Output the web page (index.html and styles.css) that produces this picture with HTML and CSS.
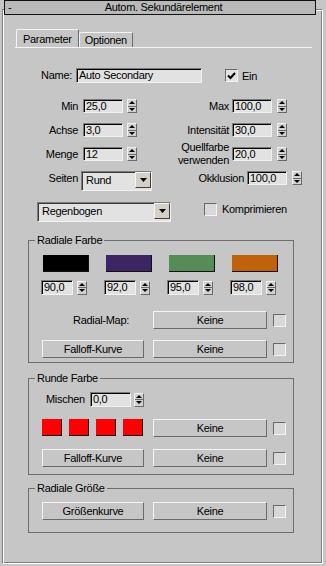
FILE: index.html
```html
<!DOCTYPE html>
<html lang="de">
<head>
    <meta charset="UTF-8">
    <meta name="viewport" content="width=device-width, initial-scale=1.0">
    <title>Autom. Sekundärelement</title>
    <link rel="stylesheet" href="styles.css">
</head>
<body>
    <div class="rollout-title">
        <span class="collapse">-</span>
        <span class="title">Autom. Sekundärelement</span>
    </div>
    <div class="rollout">
        <div class="tabs">
            <div class="tab active">Parameter</div>
            <div class="tab">Optionen</div>
        </div>

        <div class="name-row">
            <span class="lbl">Name:</span>
            <div class="field name-field">Auto Secondary</div>
            <span class="check checked"><svg width="9" height="8" viewBox="0 0 9 8"><path d="M1 3.5 3.5 6 8 1" fill="none" stroke="#000" stroke-width="2"/></svg></span>
            <span class="check-lbl">Ein</span>
        </div>

        <div class="spin-rows">
            <div class="row">
                <div class="cell left"><span class="lbl">Min</span><div class="field num">25,0</div><span class="spin"><i></i><i></i></span></div>
                <div class="cell right"><span class="lbl">Max</span><div class="field num">100,0</div><span class="spin"><i></i><i></i></span></div>
            </div>
            <div class="row">
                <div class="cell left"><span class="lbl">Achse</span><div class="field num">3,0</div><span class="spin"><i></i><i></i></span></div>
                <div class="cell right"><span class="lbl">Intensität</span><div class="field num">30,0</div><span class="spin"><i></i><i></i></span></div>
            </div>
            <div class="row">
                <div class="cell left"><span class="lbl">Menge</span><div class="field num">12</div><span class="spin"><i></i><i></i></span></div>
                <div class="cell right"><span class="lbl">Quellfarbe<br>verwenden</span><div class="field num">20,0</div><span class="spin"><i></i><i></i></span></div>
            </div>
            <div class="row top">
                <div class="cell left"><span class="lbl">Seiten</span>
                    <div class="combo sides"><span class="value">Rund</span><span class="arrow"><svg width="7" height="4" viewBox="0 0 7 4"><path d="M0 0H7L3.5 4Z"/></svg></span></div>
                </div>
                <div class="cell right"><span class="lbl">Okklusion</span><div class="field num">100,0</div><span class="spin"><i></i><i></i></span></div>
            </div>
        </div>

        <div class="style-row">
            <div class="combo preset"><span class="value">Regenbogen</span><span class="arrow"><svg width="7" height="4" viewBox="0 0 7 4"><path d="M0 0H7L3.5 4Z"/></svg></span></div>
            <span class="check"></span>
            <span class="check-lbl">Komprimieren</span>
        </div>

        <fieldset class="group radial">
            <legend>Radiale Farbe</legend>
            <div class="swatches">
                <span class="swatch" style="background:#000000"></span>
                <span class="swatch" style="background:#3b2562"></span>
                <span class="swatch" style="background:#578b57"></span>
                <span class="swatch" style="background:#c0620c"></span>
            </div>
            <div class="nums">
                <div class="numcell"><div class="field">90,0</div><span class="spin"><i></i><i></i></span></div>
                <div class="numcell"><div class="field">92,0</div><span class="spin"><i></i><i></i></span></div>
                <div class="numcell"><div class="field">95,0</div><span class="spin"><i></i><i></i></span></div>
                <div class="numcell"><div class="field">98,0</div><span class="spin"><i></i><i></i></span></div>
            </div>
            <div class="btn-row map-row">
                <span class="row-lbl">Radial-Map:</span>
                <button class="btn map">Keine</button>
                <span class="check"></span>
            </div>
            <div class="btn-row falloff-row">
                <button class="btn curve">Falloff-Kurve</button>
                <button class="btn map">Keine</button>
                <span class="check"></span>
            </div>
        </fieldset>

        <fieldset class="group round">
            <legend>Runde Farbe</legend>
            <div class="mix-row">
                <span class="lbl">Mischen</span>
                <div class="field">0,0</div>
                <span class="spin"><i></i><i></i></span>
            </div>
            <div class="btn-row squares-row">
                <div class="squares">
                    <span class="sq"></span><span class="sq"></span><span class="sq"></span><span class="sq"></span>
                </div>
                <button class="btn map">Keine</button>
                <span class="check"></span>
            </div>
            <div class="btn-row falloff-row">
                <button class="btn curve">Falloff-Kurve</button>
                <button class="btn map">Keine</button>
                <span class="check"></span>
            </div>
        </fieldset>

        <fieldset class="group size">
            <legend>Radiale Größe</legend>
            <div class="btn-row size-row">
                <button class="btn curve">Größenkurve</button>
                <button class="btn map">Keine</button>
                <span class="check"></span>
            </div>
        </fieldset>
    </div>
</body>
</html>
```

FILE: styles.css
```css
* {
    box-sizing: border-box;
}
body {
    margin: 0;
    width: 326px;
    height: 566px;
    overflow: hidden;
    background: #c6c6c6;
    font-family: 'Liberation Sans', Arial, sans-serif;
    font-size: 11px;
    letter-spacing: -0.3px;
    color: #000;
}

/* rollout header */
.rollout-title {
    position: relative;
    z-index: 1;
    display: flex;
    align-items: center;
    width: 312px;
    height: 15px;
    margin-left: 4px;
    border: 1px solid #111;
    background: #b9b9b9;
    line-height: 13px;
}
.rollout-title .collapse {
    width: 14px;
    padding-left: 3px;
}
.rollout-title .title {
    flex: 1;
    text-align: center;
    padding-right: 7px;
}
.rollout {
    width: 321px;
    height: 555px;
    margin: -6px 0 0 2px;
    border: 1px solid;
    border-color: #808080 #fff #fff #808080;
    box-shadow: inset 1px 1px #fff, inset -1px -1px #808080;
}

/* tabs */
.tabs {
    display: flex;
    align-items: flex-end;
    width: 297px;
    height: 19px;
    margin: 19px 0 0 12px;
    border-bottom: 1px solid #f4f4f4;
}
.tab {
    display: flex;
    align-items: center;
    height: 15px;
    padding: 0 5px;
    border: 1px solid;
    border-bottom: 0;
    border-color: #f4f4f4 #6a6a6a transparent #f4f4f4;
    border-radius: 2px 2px 0 0;
}
.tab.active {
    height: 18px;
    padding: 0 6px;
    margin-left: 1px;
}

/* common controls */
.lbl {
    line-height: 13px;
    white-space: nowrap;
}
.field {
    height: 14px;
    padding-left: 2px;
    background: #e2e2e2;
    border: 1px solid;
    border-color: #7c7c7c #f2f2f2 #f2f2f2 #7c7c7c;
    box-shadow: inset 1px 1px #000;
    line-height: 12px;
    white-space: nowrap;
    overflow: hidden;
}
.spin {
    display: flex;
    flex-direction: column;
    width: 10px;
    height: 14px;
    background: #d2d2d2;
    border: 1px solid;
    border-color: #f2f2f2 #6a6a6a #6a6a6a #f2f2f2;
}
.spin i {
    flex: 1;
    display: flex;
    align-items: center;
    justify-content: center;
}
.spin i + i {
    border-top: 1px solid #6a6a6a;
}
.spin i::before {
    content: "";
    border-left: 3px solid transparent;
    border-right: 3px solid transparent;
    border-bottom: 3px solid #000;
}
.spin i + i::before {
    border-bottom: 0;
    border-top: 3px solid #000;
}
.check {
    display: flex;
    align-items: center;
    justify-content: center;
    width: 13px;
    height: 13px;
    background: #d8d8d8;
    border: 1px solid;
    border-color: #6a6a6a #f4f4f4 #f4f4f4 #6a6a6a;
}
.check.checked {
    background: #e2e2e2;
}
.combo {
    display: flex;
    align-items: flex-start;
    height: 20px;
    padding-left: 4px;
    background: #e2e2e2;
    border: 1px solid;
    border-color: #7c7c7c #f2f2f2 #f2f2f2 #7c7c7c;
    box-shadow: inset 1px 1px #3a3a3a;
}
.combo .value {
    flex: 1;
    line-height: 17px;
}
.combo .arrow {
    display: flex;
    align-items: center;
    justify-content: center;
    width: 16px;
    height: 16px;
    background: #d4d0c8;
    border: 1px solid;
    border-color: #f4f4f4 #404040 #404040 #f4f4f4;
}
.btn {
    display: flex;
    align-items: center;
    justify-content: center;
    height: 18px;
    padding: 0;
    background: #c6c6c6;
    border: 1px solid;
    border-color: #f4f4f4 #6a6a6a #6a6a6a #f4f4f4;
    font: inherit;
    letter-spacing: inherit;
    color: #000;
}

/* name row */
.name-row {
    display: flex;
    align-items: center;
    height: 15px;
    margin-top: 20px;
}
.name-row .lbl {
    width: 69px;
    text-align: right;
}
.name-field {
    width: 126px;
    height: 15px;
    margin-left: 4px;
    line-height: 13px;
}
.name-row .check {
    margin-left: 23px;
}
.check-lbl {
    margin-left: 4px;
}

/* spinner rows */
.spin-rows {
    display: flex;
    flex-direction: column;
    gap: 10px;
    width: 284px;
    margin-top: 16px;
}
.row {
    display: flex;
    align-items: center;
    height: 14px;
}
.row.top {
    align-items: flex-start;
    height: 20px;
}
.cell {
    display: flex;
    align-items: center;
}
.row.top .cell {
    align-items: flex-start;
}
.row.top .lbl {
    line-height: 14px;
}
.cell .lbl {
    text-align: right;
}
.cell.left .lbl {
    width: 75px;
}
.cell.left .field {
    margin-left: 5px;
}
.cell.left .spin {
    margin-left: 4px;
}
.cell.right {
    width: 150px;
    margin-left: auto;
}
.cell.right .lbl {
    width: 92px;
}
.cell.right .field {
    margin-left: 3px;
}
.cell.right .spin {
    margin-left: 5px;
}
.num {
    width: 40px;
}
.combo.sides {
    width: 71px;
    margin-left: 3px;
}

.style-row {
    display: flex;
    align-items: flex-start;
    height: 20px;
    margin-top: 11px;
}
.combo.preset {
    width: 134px;
    margin-left: 34px;
}
.style-row .check {
    margin: 1px 0 0 33px;
}
.style-row .check-lbl {
    margin-left: 5px;
    line-height: 15px;
}

/* groups */
.group {
    width: 266px;
    min-width: 0;
    margin: 12px 0 0 25px;
    padding: 0 0 4px 6px;
    border: 1px solid #6e6e6e;
}
.group legend {
    padding: 0 2px;
    line-height: 13px;
}
.group.round {
    margin-top: 9px;
    padding-bottom: 7px;
}
.group.size {
    margin-top: 7px;
    padding-bottom: 12px;
}
.swatches {
    display: flex;
    gap: 17px;
    margin: 8px 0 0 8px;
}
.swatch {
    width: 46px;
    height: 17px;
    border-right: 1px solid #111;
    border-bottom: 1px solid #111;
}
.nums {
    display: flex;
    gap: 17px;
    margin: 8px 0 0 6px;
}
.numcell {
    display: flex;
    align-items: center;
}
.numcell .field {
    width: 32px;
    height: 15px;
    line-height: 13px;
}
.numcell .spin {
    margin-left: 4px;
}
.btn-row {
    display: flex;
    align-items: center;
    height: 18px;
    margin-left: 7px;
}
.btn-row .row-lbl {
    width: 102px;
    padding-right: 15px;
    text-align: right;
}
.btn.curve {
    width: 102px;
}
.btn.map {
    width: 114px;
    margin-left: 9px;
}
.btn-row .check {
    margin-left: 6px;
}
.map-row {
    margin-top: 16px;
}
.radial .falloff-row {
    margin-top: 11px;
}
.round .falloff-row {
    margin-top: 12px;
}
.mix-row {
    display: flex;
    align-items: center;
    height: 15px;
    margin: 7px 0 0 11px;
}
.mix-row .field {
    width: 41px;
    height: 15px;
    margin-left: 5px;
    line-height: 13px;
}
.mix-row .spin {
    margin-left: 3px;
}
.squares-row {
    margin-top: 12px;
}
.squares {
    display: flex;
    align-self: flex-start;
    gap: 7px;
    width: 102px;
}
.sq {
    width: 20px;
    height: 17px;
    background: #ff0000;
    border-right: 1px solid #111;
    border-bottom: 1px solid #111;
}
.size-row {
    margin-top: 7px;
}
```
